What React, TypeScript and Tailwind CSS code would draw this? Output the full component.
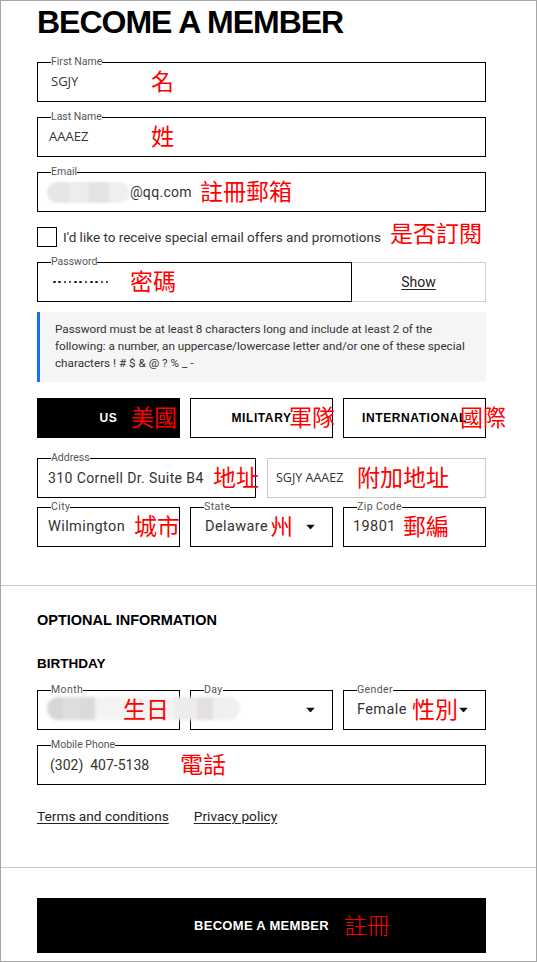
import type { ReactNode } from "react";

function Note({ children, className = "" }: { children: ReactNode; className?: string }) {
  return (
    <span
      className={`pointer-events-none absolute top-[calc(50%-2px)] -translate-y-1/2 whitespace-nowrap font-['Noto_Sans_CJK_TC',sans-serif] text-[23px] leading-none text-[#ff0000] ${className}`}
    >
      {children}
    </span>
  );
}

function Field({
  label,
  children,
  className = "",
}: {
  label?: string;
  children?: ReactNode;
  className?: string;
}) {
  return (
    <div className={`relative flex h-10 items-center border ${className}`}>
      {label && (
        <span className="absolute left-[13px] top-[-1px] -translate-y-1/2 bg-white text-[10.5px] leading-none text-[#555]">
          {label}
        </span>
      )}
      {children}
    </div>
  );
}

function Caret() {
  return (
    <svg className="absolute right-[17px] top-1/2 -translate-y-1/2" width="9" height="5" viewBox="0 0 9 5">
      <polygon points="0,0 9,0 4.5,5" fill="#111" />
    </svg>
  );
}

export default function App() {
  return (
    <div className="h-[962px] w-[537px] overflow-hidden border border-[#a6a6a6] bg-white font-['Roboto',sans-serif] text-[#222]">
      {/* account */}
      <div className="pb-[38px] pl-[36px] pr-[50px] pt-[5px]">
        <h1 className="h-[32px] font-['Liberation_Sans',sans-serif] text-[32px] font-bold leading-[32px] tracking-[-1px] text-black">
          BECOME A MEMBER
        </h1>

        <div className="mt-[24px] flex flex-col gap-[15px]">
          <Field label="First Name" className="border-black">
            <span className="pl-[13px] font-['Open_Sans',sans-serif] text-[13px] text-[#333]">SGJY</span>
            <Note className="left-[113px]">名</Note>
          </Field>
          <Field label="Last Name" className="border-black">
            <span className="pl-[11px] font-['Open_Sans',sans-serif] text-[13px] text-[#333]">AAAEZ</span>
            <Note className="left-[113px]">姓</Note>
          </Field>
          <Field label="Email" className="border-black">
            <div className="ml-[9px] flex h-[21px] w-[83px] overflow-hidden rounded-full blur-[1px]">
              <div className="w-[22px] bg-[#e6e6e6]" />
              <div className="w-[20px] bg-[#ededed]" />
              <div className="w-[20px] bg-[#e3e3e3]" />
              <div className="w-[21px] bg-[#efefef]" />
            </div>
            <span className="text-[14px] tracking-[0.3px] text-[#333]">@qq.com</span>
            <Note className="left-[162px]">註冊郵箱</Note>
          </Field>

          <label className="relative flex h-[20px] items-center">
            <span className="h-[20px] w-[20px] border border-black" />
            <span className="ml-[6px] text-[13.5px] text-[#333]">
              I&apos;d like to receive special email offers and promotions
            </span>
            <span className="-mt-[9px] ml-[9px] font-['Noto_Sans_CJK_TC',sans-serif] text-[23px] leading-none text-[#ff0000]">
              是否訂閱
            </span>
          </label>

          <div className="flex">
            <Field label="Password" className="w-[315px] border-black">
              <div className="ml-[15px] flex gap-[2.8px]">
                {Array.from({ length: 11 }).map((_, i) => (
                  <span key={i} className="h-[2.5px] w-[2.5px] rounded-full bg-[#222]" />
                ))}
              </div>
              <Note className="left-[92px]">密碼</Note>
            </Field>
            <div className="flex h-10 flex-1 items-center justify-center border border-l-0 border-[#cfcfcf] text-[14px] text-[#222] underline underline-offset-2">
              Show
            </div>
          </div>
        </div>

        <div className="mt-[10px] h-[70px] border-l-[3px] border-[#1a6ff0] bg-[#f5f5f5] pl-[15px] pr-[16px] pt-[9px] text-[11.7px] leading-[17px] text-[#333]">
          Password must be at least 8 characters long and include at least 2 of the following: a number, an
          uppercase/lowercase letter and/or one of these special characters ! # $ &amp; @ ? % _ -
        </div>

        <div className="mt-[16px] grid grid-cols-3 gap-[10px] font-['Liberation_Sans',sans-serif] text-[12px] font-bold tracking-[0.6px]">
          <div className="relative flex h-10 items-center justify-center border border-black bg-black text-white">
            US
            <Note className="left-[93px] font-normal tracking-normal">美國</Note>
          </div>
          <div className="relative flex h-10 items-center justify-center border border-black text-black">
            MILITARY
            <Note className="left-[98px] font-normal tracking-normal">軍隊</Note>
          </div>
          <div className="relative flex h-10 items-center justify-center border border-black text-black">
            INTERNATIONAL
            <Note className="left-[116px] font-normal tracking-normal">國際</Note>
          </div>
        </div>

        <div className="mt-[20px] grid grid-cols-2 gap-[11px]">
          <Field label="Address" className="border-black">
            <span className="pl-[10px] text-[14px] tracking-[0.4px] text-[#333]">310 Cornell Dr. Suite B4</span>
            <Note className="left-[175px]">地址</Note>
          </Field>
          <Field className="border-[#c8c8c8]">
            <span className="pl-[8px] font-['Open_Sans',sans-serif] text-[12.5px] text-[#333]">SGJY AAAEZ</span>
            <Note className="left-[89px]">附加地址</Note>
          </Field>
        </div>

        <div className="mt-[9px] grid grid-cols-3 gap-[10px] text-[14.5px] tracking-[0.4px] text-[#333]">
          <Field label="City" className="border-black">
            <span className="pl-[10px]">Wilmington</span>
            <Note className="left-[96px] tracking-normal">城市</Note>
          </Field>
          <Field label="State" className="border-black">
            <span className="pl-[14px]">Delaware</span>
            <Note className="left-[79px] tracking-normal">州</Note>
            <Caret />
          </Field>
          <Field label="Zip Code" className="border-black">
            <span className="pl-[9px]">19801</span>
            <Note className="left-[59px] tracking-normal">郵編</Note>
          </Field>
        </div>
      </div>

      <div className="h-px bg-[#c8c8c8]" />

      {/* optional */}
      <div className="pb-[41px] pl-[36px] pr-[50px] pt-[24px]">
        <h2 className="font-['Liberation_Sans',sans-serif] text-[14.5px] font-bold leading-[20px] text-black">
          OPTIONAL INFORMATION
        </h2>
        <h3 className="mt-[24px] font-['Liberation_Sans',sans-serif] text-[13.5px] font-bold leading-[20px] text-black">
          BIRTHDAY
        </h3>

        <div className="relative mt-[16px] grid grid-cols-3 gap-[10px] text-[14.5px] tracking-[0.4px] text-[#333]">
          <Field label="Month" className="border-black" />
          <Field label="Day" className="border-black">
            <Caret />
          </Field>
          <Field label="Gender" className="border-black">
            <span className="pl-[13px]">Female</span>
            <Note className="left-[68px] tracking-normal">性別</Note>
            <Caret />
          </Field>
          <div className="pointer-events-none absolute left-[10px] top-[7px] flex h-[23px] w-[193px] overflow-hidden rounded-full blur-[1.5px]">
            <div className="w-[16px] bg-[#d6d6d6]" />
            <div className="w-[16px] bg-[#dedede]" />
            <div className="w-[16px] bg-[#dadada]" />
            <div className="w-[80px] bg-[#f3f3f3]" />
            <div className="w-[22px] bg-[#ececec]" />
            <div className="w-[16px] bg-[#e4e0e0]" />
            <div className="w-[27px] bg-[#f0f0f0]" />
          </div>
          <Note className="left-[86px] tracking-normal">生日</Note>
        </div>

        <Field label="Mobile Phone" className="mt-[15px] border-black">
          <span className="whitespace-pre pl-[12px] text-[14px] text-[#333]">(302)  407-5138</span>
          <Note className="left-[142px]">電話</Note>
        </Field>

        <div className="mt-[21px] flex gap-[25px] text-[13.7px] leading-[20px] text-[#222]">
          <a className="underline underline-offset-2">Terms and conditions</a>
          <a className="underline underline-offset-2">Privacy policy</a>
        </div>
      </div>

      <div className="h-px bg-[#c8c8c8]" />

      <div className="pl-[36px] pr-[50px] pt-[30px]">
        <button className="relative flex h-[55px] w-full items-center justify-center bg-black font-['Liberation_Sans',sans-serif] text-[13px] font-bold tracking-[0.3px] text-white">
          BECOME A MEMBER
          <Note className="left-[307px] font-light tracking-normal text-[#e80000]">註冊</Note>
        </button>
      </div>
    </div>
  );
}
